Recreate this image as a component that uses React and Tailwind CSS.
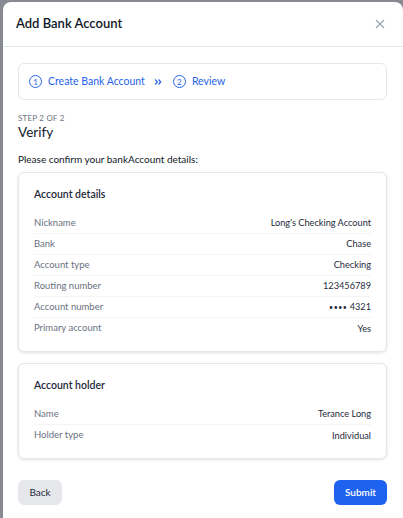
import React from "react";

function Row({ label, value, last }) {
  return (
    <div className={"flex items-center justify-between h-[21px] " + (last ? "" : "border-b border-gray-100")}>
      <span className="text-[9.5px] text-gray-500">{label}</span>
      <span className="text-[9.2px] text-gray-800">{value}</span>
    </div>
  );
}

function Card({ title, rows }) {
  return (
    <div className="rounded-md border border-gray-200 bg-white shadow-[0_1px_3px_rgba(0,0,0,0.12)] px-[15px] pt-[13px] pb-[12px]">
      <div className="text-[10.5px] font-semibold text-gray-800 mb-[11px] leading-[16px]">{title}</div>
      <div className="flex flex-col">
        {rows.map((r, i) => (
          <Row key={r[0]} label={r[0]} value={r[1]} last={i === rows.length - 1} />
        ))}
      </div>
    </div>
  );
}

function Circle({ n }) {
  return (
    <span className="flex items-center justify-center w-[13px] h-[13px] rounded-full border border-[#2563eb] text-[8px] leading-none text-[#2563eb]">
      {n}
    </span>
  );
}

export default function App() {
  return (
    <div
      className="w-[403px] h-[518px] overflow-hidden bg-[#878a91] pl-[3px] pt-[2px]"
      style={{ fontFamily: 'Lato, "Noto Sans", sans-serif' }}
    >
      <div className="w-[400px] h-[530px] bg-white rounded-lg flex flex-col">
        <div className="flex items-center justify-between h-[45px] border-b border-gray-200 pl-[13px] pr-[18px]">
          <span className="text-[13px] font-semibold text-gray-900">Add Bank Account</span>
          <svg width="10" height="10" viewBox="0 0 10 10" className="text-gray-400">
            <path d="M1 1L9 9M9 1L1 9" stroke="currentColor" strokeWidth="1.1" />
          </svg>
        </div>
        <div className="pl-[15px] pr-[16px] pt-[16px]">
          <div className="flex items-center h-[37px] rounded-md border border-gray-200 pl-[10px] text-[10.5px] text-[#2563eb]">
            <Circle n="1" />
            <span className="ml-[6px]">Create Bank Account</span>
            <svg width="8" height="8" viewBox="0 0 8 8" className="ml-[9px]">
              <path d="M1.2 1.5L3.3 4L1.2 6.5M4.6 1.5L6.7 4L4.6 6.5" stroke="currentColor" strokeWidth="1.2" fill="none" />
            </svg>
            <span className="ml-[11px]"><Circle n="2" /></span>
            <span className="ml-[6px]">Review</span>
          </div>
          <div className="mt-[12px] text-[8px] tracking-[0.2px] text-gray-500 leading-[12px]">STEP 2 OF 2</div>
          <div className="text-[13.5px] text-gray-900 leading-[16px]">Verify</div>
          <div className="mt-[12px] text-[10px] text-gray-900 leading-[14px]">Please confirm your bankAccount details:</div>
          <div className="mt-[6px] flex flex-col gap-[11px]">
            <Card
              title="Account details"
              rows={[
                ["Nickname", "Long's Checking Account"],
                ["Bank", "Chase"],
                ["Account type", "Checking"],
                ["Routing number", "123456789"],
                ["Account number", <span key="a"><span className="text-[7px] tracking-[0.5px]">••••</span> 4321</span>],
                ["Primary account", "Yes"],
              ]}
            />
            <Card
              title="Account holder"
              rows={[
                ["Name", "Terance Long"],
                ["Holder type", "Individual"],
              ]}
            />
          </div>
          <div className="mt-[21px] flex items-center justify-between">
            <button className="h-[25px] w-[44px] rounded-md bg-gray-200 text-[10px] text-gray-800">Back</button>
            <button className="h-[25px] w-[53px] rounded-md bg-[#1d63f0] text-[10px] font-semibold text-white">Submit</button>
          </div>
        </div>
      </div>
    </div>
  );
}
